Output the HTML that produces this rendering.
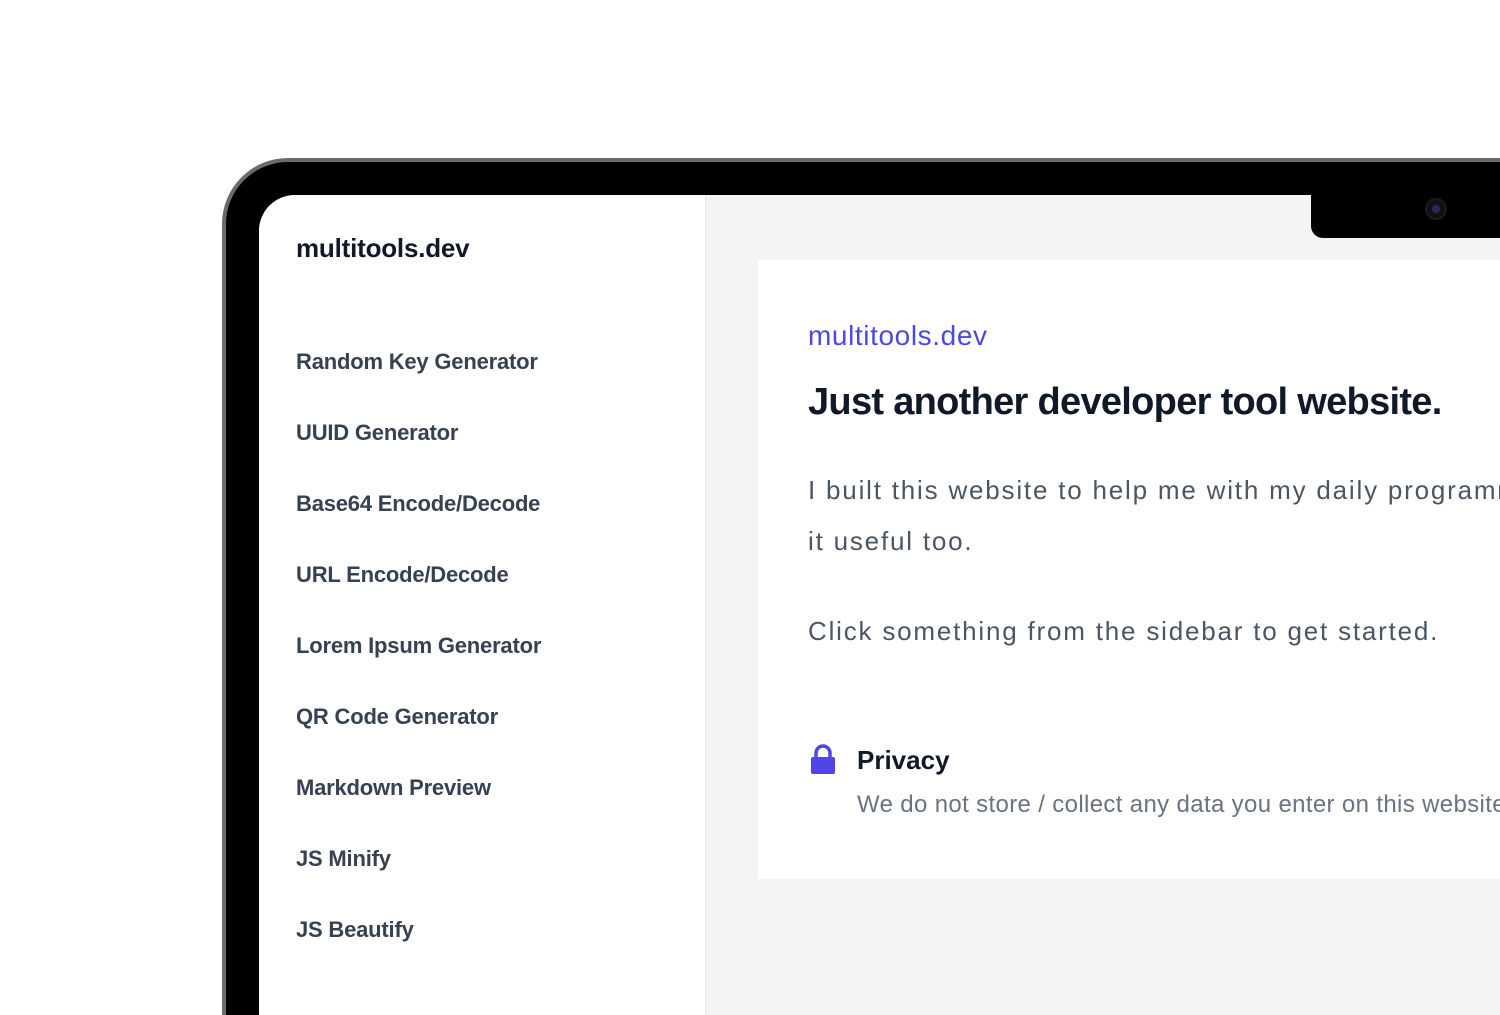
<!DOCTYPE html>
<html style="overflow:hidden;height:1015px"><head><meta charset="utf-8"><style>
*{margin:0;padding:0;box-sizing:border-box}
body{width:1500px;height:1015px;overflow:hidden;background:#fff;font-family:"Liberation Sans",sans-serif;position:relative}
.clip{position:absolute;left:0;top:0;width:1500px;height:1015px;overflow:hidden}
.bezel{position:absolute;left:222px;top:158px;width:1278px;height:857px;border-radius:66px 0 0 0;background:#6b6b6e}
.black{position:absolute;left:226px;top:162px;width:1274px;height:853px;border-radius:62px 0 0 0;background:#000}
.screen{position:absolute;left:259px;top:195px;width:1241px;height:820px;border-radius:36px 0 0 0;background:#f3f4f6;overflow:hidden}
.side{position:absolute;left:0;top:0;width:447px;height:820px;background:#fff;border-right:1px solid #e5e7eb}
.notch{position:absolute;left:1311px;top:190px;width:189px;height:48px;background:#000;border-radius:0 0 0 12px}
.cam{position:absolute;left:1425px;top:198px;width:22px;height:22px;border-radius:50%;background:#111;border:2px solid #1c1c22}
.cam:after{content:"";position:absolute;left:5px;top:5px;width:8px;height:8px;border-radius:50%;background:#2a2a5a}
.t{position:absolute;white-space:nowrap;line-height:1}
.nav{left:296px;font-size:22px;color:#374151;font-weight:bold;letter-spacing:-0.2px}
.card{position:absolute;left:758px;top:260px;width:742px;height:619px;background:#fff;overflow:hidden}
.p{font-size:26px;color:#4b5563;letter-spacing:1.8px}
</style></head><body>
<div class="clip">
<div class="bezel"></div><div class="black"></div>
<div class="screen"><div class="side"></div></div>
<div class="notch"></div><div class="cam"></div>
<div class="t" style="left:296px;top:235px;font-size:26px;font-weight:bold;color:#111827;letter-spacing:-0.2px">multitools.dev</div>
<div class="t nav" style="top:351px">Random Key Generator</div>
<div class="t nav" style="top:422px">UUID Generator</div>
<div class="t nav" style="top:493px">Base64 Encode/Decode</div>
<div class="t nav" style="top:564px">URL Encode/Decode</div>
<div class="t nav" style="top:635px">Lorem Ipsum Generator</div>
<div class="t nav" style="top:706px">QR Code Generator</div>
<div class="t nav" style="top:777px">Markdown Preview</div>
<div class="t nav" style="top:848px">JS Minify</div>
<div class="t nav" style="top:919px">JS Beautify</div>
<div class="card">
<div class="t" style="left:50px;top:62px;font-size:28px;color:#4f46e5;letter-spacing:0.6px">multitools.dev</div>
<div class="t" style="left:50px;top:123px;font-size:38px;font-weight:bold;color:#111827;letter-spacing:-0.7px">Just another developer tool website.</div>
<div class="t p" style="left:50px;top:217px">I built this website to help me with my daily programming tasks.</div>
<div class="t p" style="left:50px;top:268px">it useful too.</div>
<div class="t p" style="left:50px;top:358px">Click something from the sidebar to get started.</div>
<svg style="position:absolute;left:52px;top:484px" width="26" height="32" viewBox="0 0 26 32"><path d="M6 14V9a7 7 0 0 1 14 0v5" fill="none" stroke="#4f46e5" stroke-width="3.5"/><rect x="1" y="13" width="24" height="17" rx="2" fill="#4f46e5"/></svg>
<div class="t" style="left:99px;top:487px;font-size:26px;font-weight:bold;color:#111827">Privacy</div>
<div class="t" style="left:99px;top:533px;font-size:24px;color:#6b7280;letter-spacing:0.35px">We do not store / collect any data you enter on this website.</div>
</div>
</div>
</body></html>
